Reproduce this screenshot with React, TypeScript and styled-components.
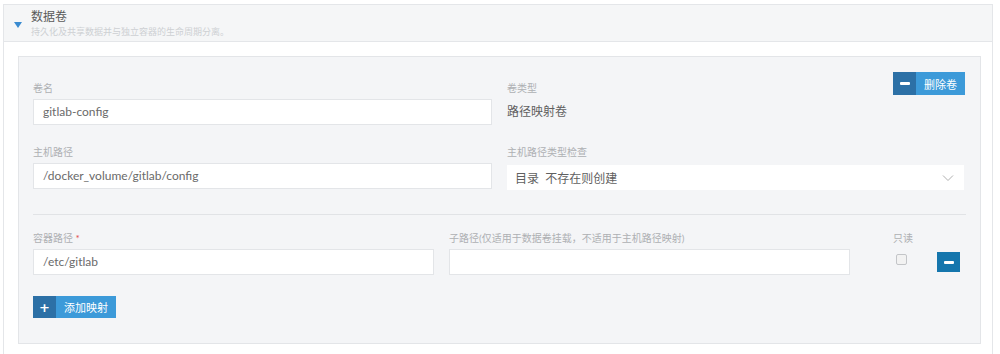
import styled, { createGlobalStyle } from "styled-components";

const GlobalStyle = createGlobalStyle`
  body {
    margin: 0;
    background: #ffffff;
    font-family: "Lato", "Noto Sans CJK SC", sans-serif;
  }
`;

export default function App() {
  return (
    <>
      <GlobalStyle />
      <Page>
        <Panel>
          <PanelHeader>
            <Caret />
            <HeaderText>
              <Title>数据卷</Title>
              <Subtitle>持久化及共享数据并与独立容器的生命周期分离。</Subtitle>
            </HeaderText>
          </PanelHeader>
          <PanelBody>
            <VolumeCard>
              <SplitButton $top={15}>
                <ButtonIcon>
                  <MinusBar />
                </ButtonIcon>
                <ButtonLabel>删除卷</ButtonLabel>
              </SplitButton>

              <TwoCols>
                <Field>
                  <Label>卷名</Label>
                  <TextBox>gitlab-config</TextBox>
                </Field>
                <Field>
                  <Label>卷类型</Label>
                  <StaticValue>路径映射卷</StaticValue>
                </Field>
              </TwoCols>

              <TwoCols $gap={20}>
                <Field>
                  <Label>主机路径</Label>
                  <TextBox>/docker_volume/gitlab/config</TextBox>
                </Field>
                <Field>
                  <Label>主机路径类型检查</Label>
                  <Select>
                    <span>目录&nbsp;&nbsp;不存在则创建</span>
                    <svg width="12" height="8" viewBox="0 0 12 8">
                      <path d="M1 1.5 L6 6.5 L11 1.5" fill="none" stroke="#b0b0b0" strokeWidth="1" />
                    </svg>
                  </Select>
                </Field>
              </TwoCols>

              <Divider />

              <MountRow>
                <Field>
                  <Label>
                    容器路径 <Required>*</Required>
                  </Label>
                  <TextBox>/etc/gitlab</TextBox>
                </Field>
                <Field>
                  <Label>子路径(仅适用于数据卷挂载，不适用于主机路径映射)</Label>
                  <TextBox />
                </Field>
                <ReadOnlyCell>
                  <ReadOnlyField>
                    <Label>只读</Label>
                    <Checkbox />
                  </ReadOnlyField>
                  <IconButton>
                    <MinusBar />
                  </IconButton>
                </ReadOnlyCell>
              </MountRow>

              <AddRow>
                <SplitButton>
                  <ButtonIcon>
                    <PlusSign>+</PlusSign>
                  </ButtonIcon>
                  <ButtonLabel>添加映射</ButtonLabel>
                </SplitButton>
              </AddRow>
            </VolumeCard>
          </PanelBody>
        </Panel>
      </Page>
    </>
  );
}

const Page = styled.div`
  padding: 4px 7px 0 3px;
`;

const Panel = styled.div`
  border: 1px solid #e4e6e9;
  border-bottom: none;
`;

const PanelHeader = styled.div`
  display: flex;
  align-items: center;
  height: 37px;
  background: #f5f6f7;
  border-bottom: 1px solid #e4e6e9;
  padding-left: 9px;
  box-sizing: border-box;
`;

const Caret = styled.div`
  width: 0;
  height: 0;
  border-left: 4px solid transparent;
  border-right: 4px solid transparent;
  border-top: 6px solid #3a8bd0;
  margin: 4px 9px 0 1px;
`;

const HeaderText = styled.div`
  display: flex;
  flex-direction: column;
`;

const Title = styled.div`
  font-size: 12px;
  line-height: 16px;
  color: #5a5a5a;
`;

const Subtitle = styled.div`
  font-size: 9px;
  line-height: 13px;
  color: #cdd0d3;
`;

const PanelBody = styled.div`
  padding: 14px 11px 12px 14px;
  background: #fff;
`;

const VolumeCard = styled.div`
  position: relative;
  background: #f4f5f7;
  border: 1px solid #e3e5e8;
  padding: 24px 14px 25px 14px;
`;

const TwoCols = styled.div<{ $gap?: number }>`
  display: grid;
  grid-template-columns: 1fr 1fr;
  column-gap: 15px;
  margin-top: ${(p) => p.$gap ?? 0}px;
`;

const Field = styled.div`
  display: flex;
  flex-direction: column;
  min-width: 0;
`;

const Label = styled.div`
  font-size: 10px;
  line-height: 14px;
  color: #aeb0b3;
  margin-bottom: 4px;
  white-space: nowrap;
`;

const Required = styled.span`
  color: #e24a4a;
`;

const TextBox = styled.div`
  height: 26px;
  box-sizing: border-box;
  background: #fff;
  border: 1px solid #e3e5e8;
  padding: 0 9px;
  font-size: 12px;
  line-height: 24px;
  color: #6a6a6a;
`;

const StaticValue = styled.div`
  height: 26px;
  font-size: 12px;
  line-height: 26px;
  color: #606060;
`;

const Select = styled.div`
  display: flex;
  align-items: center;
  justify-content: space-between;
  height: 25px;
  margin-top: 2px;
  margin-right: 2px;
  box-sizing: border-box;
  background: #fff;
  padding: 0 10px 0 8px;
  font-size: 12px;
  color: #606060;
`;

const Divider = styled.div`
  height: 1px;
  background: #e1e3e6;
  margin: 24px 0 16px;
`;

const MountRow = styled.div`
  display: grid;
  grid-template-columns: 1fr 1fr 101px;
  column-gap: 15px;
`;

const ReadOnlyCell = styled.div`
  display: flex;
  align-items: flex-start;
  padding-left: 28px;
  padding-right: 6px;
`;

const ReadOnlyField = styled.div`
  display: flex;
  flex-direction: column;
`;

const Checkbox = styled.div`
  width: 9px;
  height: 9px;
  margin: 5px 0 0 3px;
  border: 1px solid #c3c5c8;
  border-radius: 2px;
  background: #f2f2f2;
`;

const IconButton = styled.div`
  margin-left: auto;
  margin-top: 21px;
  width: 23px;
  height: 20px;
  background: #1576ad;
  display: flex;
  align-items: center;
  justify-content: center;
`;

const MinusBar = styled.div`
  width: 10px;
  height: 3px;
  background: #fff;
  border-radius: 1px;
`;

const AddRow = styled.div`
  display: flex;
  margin-top: 21px;
`;

const SplitButton = styled.div<{ $top?: number }>`
  display: inline-flex;
  height: 22px;
  background: #3c9ad9;
  ${(p) =>
    p.$top !== undefined &&
    `
    position: absolute;
    top: ${p.$top}px;
    right: 15px;
    height: 23px;
  `}
`;

const ButtonIcon = styled.div`
  width: 23px;
  display: flex;
  align-items: center;
  justify-content: center;
  background: #2c70a6;
`;

const PlusSign = styled.span`
  color: #fff;
  font-family: "DejaVu Sans", sans-serif;
  font-weight: bold;
  font-size: 13px;
  line-height: 13px;
`;

const ButtonLabel = styled.div`
  display: flex;
  align-items: center;
  padding: 0 8px 0 8px;
  font-size: 11px;
  color: #fff;
`;
